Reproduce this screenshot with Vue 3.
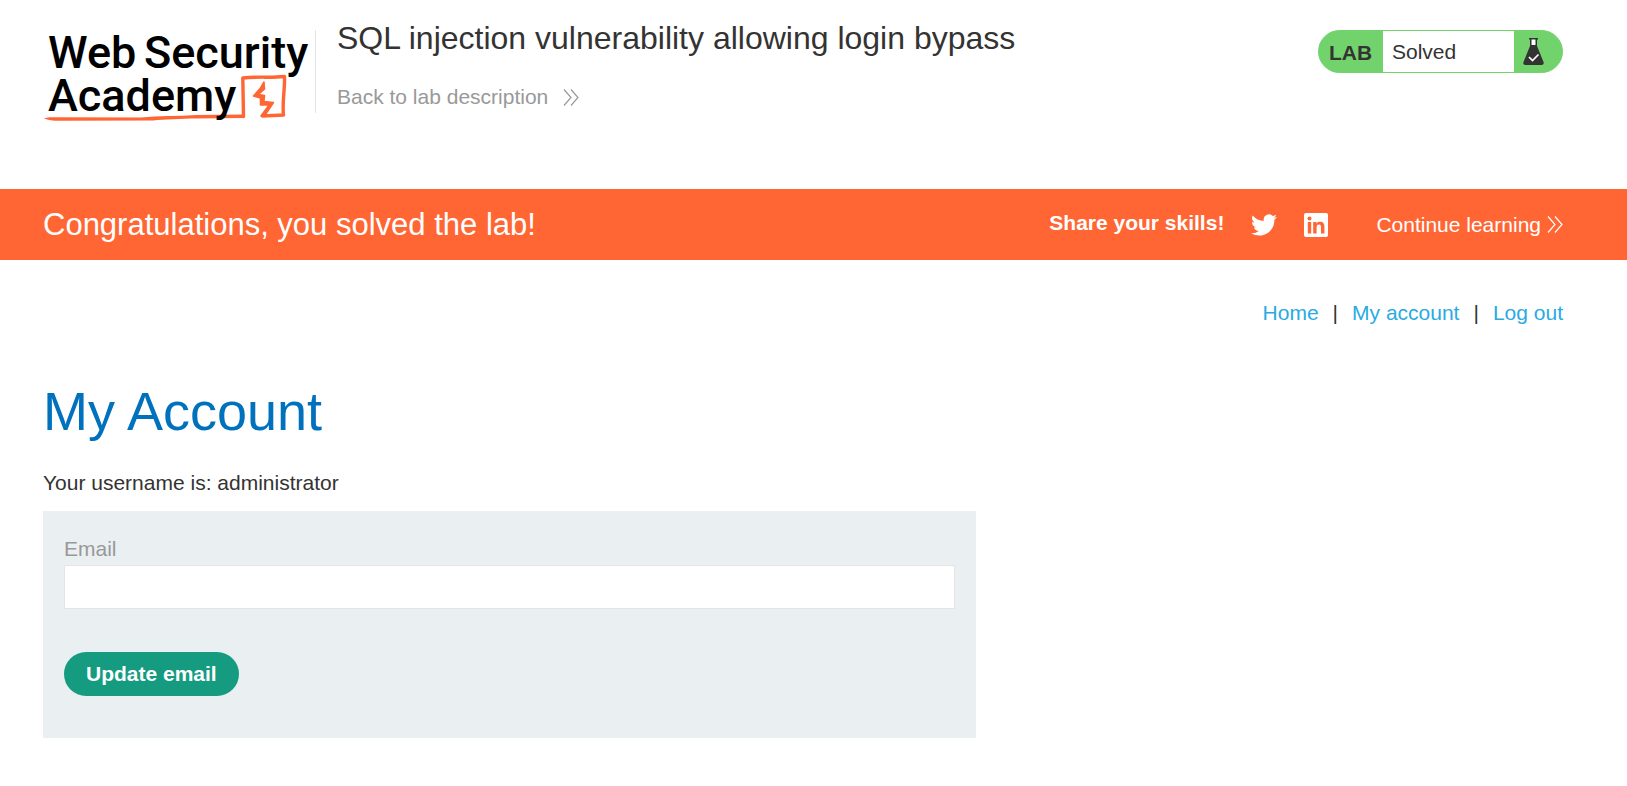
<script setup>
import { ref } from 'vue'

const email = ref('')
const navLinks = ['Home', 'My account', 'Log out']
</script>

<template>
  <div class="page">
    <header class="lab-header">
      <a class="logo" href="#" aria-label="Web Security Academy">
        <svg width="272" height="104" viewBox="0 0 272 104">
          <path fill="none" stroke="#ff6633" stroke-width="3.400" stroke-linecap="round" stroke-linejoin="round" d="M200.500 92.500L199.800 54C214 52.300 228 54 241.500 52.500C242 66 239 78 240.500 91L219.500 92" />
          <path fill="#ff6633" d="M1 94.500C4 93 9 93.500 14 93.300L98 93.500C116 91.500 135 92.300 153 91L200 90.500V94L154 94.500C138 94.800 122 95.300 110 96.500L16 96.800C10 96.800 5 96 1 94.500Z" />
          <path fill="#ff6633" stroke="#ff6633" stroke-width="1.500" stroke-linejoin="round" d="M221 58L217.500 64L210.500 72L217.500 74L217.500 81L226 81L218 92L221.500 92L230.500 78.500L221 77.500L221.500 71.500L215.500 70.500L221.500 65Z" />
          <text x="5" y="44" class="logo-text">Web</text>
          <text x="101" y="44" class="logo-text">Security</text>
          <text x="5" y="87" class="logo-text">Academy</text>
        </svg>
      </a>
      <div class="title-block">
        <h2>SQL injection vulnerability allowing login bypass</h2>
        <a class="back" href="#">Back to lab description
          <svg width="16" height="17" viewBox="0 0 16 17" fill="none" stroke="currentColor" stroke-width="1.200"><path d="M1 .5L8 8.500L1 16.500M8 .5L15 8.500L8 16.500" /></svg>
        </a>
      </div>
      <div class="status">
        <span class="status-tag">LAB</span>
        <p class="status-text">Solved</p>
        <span class="status-icon">
          <svg width="21" height="28" viewBox="0 0 21 28">
            <path fill="#333332" d="M6 0H15V1.500H14V8L20.500 24Q21.500 27 18.500 27H2.500Q-.5 27 .5 24L7 8V1.500H6Z" />
            <path fill="#fff" d="M8.500 1.500H12.500V7H8.500Z" />
            <path fill="none" stroke="#fff" stroke-width="1.700" d="M6 19L9.500 22.500L15.500 16.500" />
          </svg>
        </span>
      </div>
    </header>

    <section class="banner">
      <h4>Congratulations, you solved the lab!</h4>
      <div class="share">
        <span class="share-label">Share your skills!</span>
        <a href="#" class="social" aria-label="Share on Twitter">
          <svg width="26" height="26" viewBox="0 0 24 24" fill="#fff"><path d="M23.950 4.570a10 10 0 0 1-2.820.77 4.960 4.960 0 0 0 2.160-2.720 9.900 9.900 0 0 1-3.120 1.180 4.920 4.920 0 0 0-8.380 4.480C7.690 8.090 4.070 6.130 1.640 3.160a4.820 4.820 0 0 0-.67 2.480c0 1.710.87 3.210 2.190 4.100a4.900 4.900 0 0 1-2.230-.62v.06a4.920 4.920 0 0 0 3.950 4.830 5 5 0 0 1-2.210.08 4.940 4.940 0 0 0 4.600 3.420A9.870 9.870 0 0 1 0 19.540a13.990 13.990 0 0 0 7.560 2.210c9.050 0 14-7.500 14-13.980 0-.21 0-.42-.02-.63a9.940 9.940 0 0 0 2.410-2.570z" /></svg>
        </a>
        <a href="#" class="social" aria-label="Share on LinkedIn">
          <svg width="24" height="24" viewBox="0 0 24 24">
            <rect width="24" height="24" rx="2" fill="#fff" />
            <path fill="#ff6633" d="M3.800 9H7.200V20.500H3.800ZM9.200 9H12.400V10.600C13.200 9.300 14.400 8.700 16 8.700C19.300 8.700 20.400 10.700 20.400 13.700V20.500H17V14.500C17 12.700 16.700 11.500 15 11.500C13.200 11.500 12.600 12.700 12.600 14.500V20.500H9.200Z" />
            <circle cx="5.500" cy="5.500" r="2" fill="#ff6633" />
          </svg>
        </a>
      </div>
      <a class="continue" href="#">Continue learning
        <svg width="16" height="17" viewBox="0 0 16 17" fill="none" stroke="currentColor" stroke-width="1.200"><path d="M1 .5L8 8.500L1 16.500M8 .5L15 8.500L8 16.500" /></svg>
      </a>
    </section>

    <main class="content">
      <nav class="top-links">
        <template v-for="(link, i) in navLinks" :key="link">
          <span v-if="i > 0">|</span>
          <a href="#">{{ link }}</a>
        </template>
      </nav>
      <h1>My Account</h1>
      <p class="username">Your username is: administrator</p>
      <form class="login-form" @submit.prevent>
        <label for="email">Email</label>
        <input id="email" v-model="email" type="email" />
        <button type="submit">Update email</button>
      </form>
    </main>
  </div>
</template>

<style>
body {
  background: #fff;
}
</style>

<style scoped>
.page {
  color: #333332;
  font-family: "Liberation Sans", Arial, sans-serif;
  font-size: 21px;
  line-height: 28px;
}
h1, h2, h4, p {
  margin: 0;
  font-weight: 400;
}
a {
  text-decoration: none;
}
svg {
  display: block;
  flex: none;
}
.lab-header {
  display: flex;
  align-items: flex-start;
  padding: 18px 64px 61px 43px;
}
.logo {
  margin-top: 6px;
}
.logo-text {
  font-family: Roboto, sans-serif;
  font-size: 45px;
  font-weight: 500;
  fill: #000;
}
.title-block {
  position: relative;
  flex: 1;
  padding: 0 0 2px 22px;
}
.title-block::before {
  content: "";
  position: absolute;
  left: 0;
  top: 12px;
  bottom: 0;
  width: 1px;
  background: #e4e4e4;
}
h2 {
  font-size: 32px;
  line-height: 40px;
}
.back {
  display: flex;
  align-items: center;
  gap: 15px;
  margin-top: 25px;
  color: #999;
}
.status {
  display: flex;
  box-sizing: border-box;
  width: 245px;
  height: 43px;
  margin-top: 12px;
  border: 1px solid #72d36d;
  border-radius: 22px;
  background: #72d36d;
  overflow: hidden;
}
.status-tag {
  width: 64px;
  box-sizing: border-box;
  padding-left: 10px;
  font-weight: 700;
  line-height: 43px;
}
.status-text {
  flex: 1;
  padding-left: 9px;
  background: #fff;
  line-height: 41px;
}
.status-icon {
  width: 48px;
  box-sizing: border-box;
  padding: 7px 0 0 9px;
}
.banner {
  display: flex;
  align-items: center;
  min-height: 71px;
  padding: 0 64px 0 43px;
  background: #ff6633;
  color: #fff;
}
h4 {
  flex: 1;
  font-size: 31px;
  line-height: 40px;
}
.share {
  display: flex;
  align-items: center;
  gap: 27px;
}
.share-label {
  padding-bottom: 4px;
  font-weight: 700;
}
.continue {
  display: flex;
  align-items: center;
  gap: 6px;
  margin-left: 48px;
  color: #fff;
}
.content {
  padding: 39px 64px 48px 43px;
}
.top-links {
  display: flex;
  justify-content: flex-end;
  gap: 14px;
}
.top-links a {
  color: #29abe2;
}
h1 {
  margin-top: 54px;
  color: #0071bc;
  font-size: 54px;
  line-height: 60px;
}
.username {
  margin-top: 28px;
}
.login-form {
  display: flex;
  flex-direction: column;
  align-items: flex-start;
  box-sizing: border-box;
  max-width: 933px;
  margin-top: 14px;
  padding: 24px 21px 42px;
  background: #eaeff2;
}
label {
  color: #999;
}
input {
  box-sizing: border-box;
  width: 100%;
  height: 44px;
  margin: 2px 0 43px;
  padding: 0 8px;
  border: 1px solid #e4e4e4;
  background: #fff;
  font: inherit;
}
button {
  height: 44px;
  padding: 0 22px;
  border: 0;
  border-radius: 22px;
  background: #159c80;
  color: #fff;
  font: inherit;
  font-weight: 700;
}
</style>
